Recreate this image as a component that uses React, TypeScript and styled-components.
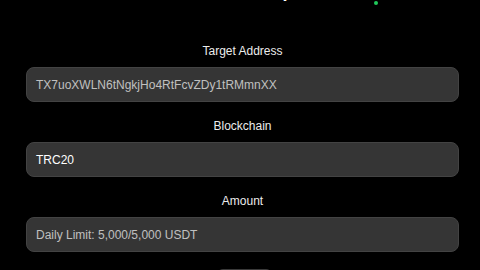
import styled, { createGlobalStyle } from "styled-components";

const GlobalStyle = createGlobalStyle`
  html, body {
    margin: 0;
    padding: 0;
    background: #000;
    overflow: hidden;
  }
  body {
    font-family: "Liberation Sans", Arial, sans-serif;
  }
`;

const Page = styled.div`
  width: 480px;
  height: 270px;
  overflow: hidden;
  background: #000;
  box-sizing: border-box;
  padding: 0 21px 0 26px;
`;

const Header = styled.div`
  display: flex;
  align-items: flex-end;
  justify-content: center;
  gap: 80px;
  height: 24px;
  margin-top: -21px;
  padding-left: 136px;
  color: #fff;
  font-size: 18px;
  font-weight: bold;
  line-height: 24px;
`;

const Form = styled.div`
  display: flex;
  flex-direction: column;
  margin-top: 41px;
  gap: 17px;
`;

const Field = styled.div`
  display: flex;
  flex-direction: column;
  gap: 9px;
`;

const Label = styled.div`
  text-align: center;
  color: #ececec;
  font-size: 12px;
  line-height: 14px;
  height: 14px;
`;

const Box = styled.div<{ $bright?: boolean }>`
  display: flex;
  align-items: center;
  height: 35px;
  box-sizing: border-box;
  padding: 0 9px;
  background: #353535;
  border: 1px solid #434343;
  border-radius: 8px;
  color: ${({ $bright }) => ($bright ? "#ffffff" : "#c0c0c0")};
  font-size: 12px;
`;

const Footer = styled.div`
  display: flex;
  justify-content: center;
  margin-top: 17px;
`;

const Button = styled.button`
  width: 55px;
  height: 32px;
  margin-left: 3px;
  border: none;
  border-radius: 6px;
  background: #3a3a3a;
  color: #fff;
  font-family: inherit;
`;

const Dot = styled.span`
  display: inline-block;
  width: 4px;
  height: 4px;
  border-radius: 50%;
  background: #1fc95a;
  margin-bottom: -2px;
`;

const fields = [
  { label: "Target Address", value: "TX7uoXWLN6tNgkjHo4RtFcvZDy1tRMmnXX" },
  { label: "Blockchain", value: "TRC20", bright: true },
  { label: "Amount", value: "Daily Limit: 5,000/5,000 USDT" },
];

export default function App() {
  return (
    <>
      <GlobalStyle />
      <Page>
        <Header>
          <span>Setup</span>
          <Dot />
        </Header>
        <Form>
          {fields.map((f) => (
            <Field key={f.label}>
              <Label>{f.label}</Label>
              <Box $bright={f.bright}>{f.value}</Box>
            </Field>
          ))}
        </Form>
        <Footer>
          <Button>Submit</Button>
        </Footer>
      </Page>
    </>
  );
}
